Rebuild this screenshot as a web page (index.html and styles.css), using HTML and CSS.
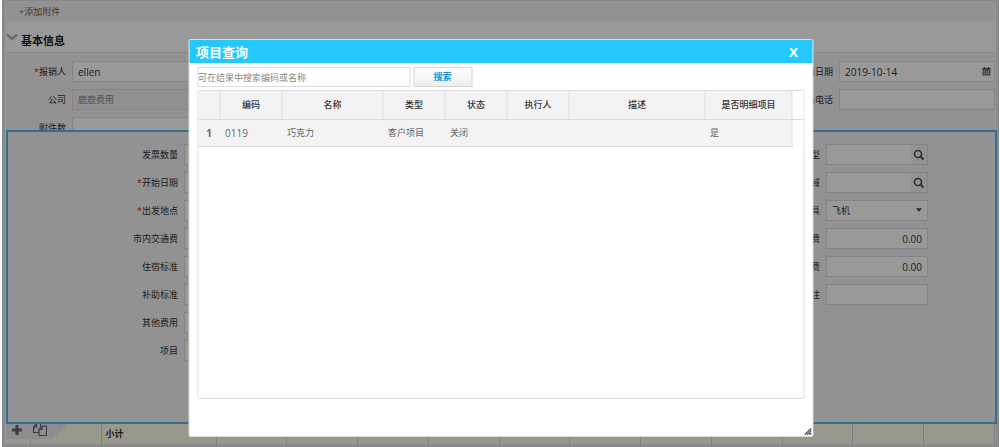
FILE: index.html
```html
<!DOCTYPE html>
<html lang="zh-CN">
<head>
<meta charset="utf-8">
<title>项目查询</title>
<link rel="stylesheet" href="styles.css">
</head>
<body>
<div class="frame">
  <main class="sheet">
    <div class="attach"><button type="button" class="attach-btn">+添加附件</button></div>
    <h2 class="section-title">
      <svg class="chevron" viewBox="0 0 12 8"><path d="M1 1.5 L6 6 L11 1.5" fill="none" stroke="#b4b4b4" stroke-width="2.6"/></svg>
      <span>基本信息</span>
    </h2>
    <form class="basic">
      <label for="person"><i>*</i>报销人</label>
      <input id="person" class="latin" value="ellen">
      <label for="date">申请日期</label>
      <div class="field">
        <input id="date" class="latin" value="2019-10-14">
        <svg class="calendar" viewBox="0 0 10 10"><path d="M0.5 1h9v2h-9zM2 0h1.4v1H2zM6.6 0H8v1H6.6z" fill="#555"/><path d="M.5 3.4h9v6.1h-9z" fill="#666"/><path d="M.5 5.4h9M.5 7.4h9M2.7 3.4v6M5 3.4v6M7.3 3.4v6" stroke="#ddd" stroke-width=".5"/></svg>
      </div>
      <label for="company">公司</label>
      <input id="company" class="disabled" value="鹿鹿费用" disabled>
      <label for="phone">联系电话</label>
      <input id="phone">
      <label for="count">附件数</label>
      <input id="count">
    </form>

    <form class="detail">
      <div class="column left">
        <label for="d1">发票数量</label><input id="d1">
        <label for="d2"><i>*</i>开始日期</label><input id="d2">
        <label for="d3"><i>*</i>出发地点</label><input id="d3">
        <label for="d4">市内交通费</label><input id="d4">
        <label for="d5">住宿标准</label><input id="d5">
        <label for="d6">补助标准</label><input id="d6">
        <label for="d7">其他费用</label><input id="d7">
        <label for="d8">项目</label><input id="d8">
      </div>
      <div class="column right">
        <label for="r1">类型</label>
        <div class="field"><input id="r1"><button type="button" class="lookup" aria-label="查找"><svg viewBox="0 0 12 12"><circle cx="5" cy="5" r="3.5" fill="none" stroke="#555" stroke-width="1.7"/><path d="M7.5 7.5L10.5 10.5" stroke="#555" stroke-width="2.2"/></svg></button></div>
        <label for="r2">区域</label>
        <div class="field"><input id="r2"><button type="button" class="lookup" aria-label="查找"><svg viewBox="0 0 12 12"><circle cx="5" cy="5" r="3.5" fill="none" stroke="#555" stroke-width="1.7"/><path d="M7.5 7.5L10.5 10.5" stroke="#555" stroke-width="2.2"/></svg></button></div>
        <label for="r3">交通工具</label>
        <div class="field"><select id="r3"><option>飞机</option></select><svg class="caret" viewBox="0 0 6 4"><path d="M0 .3h6L3 3.7z" fill="#444"/></svg></div>
        <label for="r4">交通费</label><input id="r4" class="latin number" value="0.00">
        <label for="r5">住宿费</label><input id="r5" class="latin number" value="0.00">
        <label for="r6">备注</label><input id="r6">
      </div>
    </form>

    <div class="summary">
      <table class="totals">
        <colgroup><col class="c-index"><col class="c-tools"><col class="c-name"><col><col><col><col><col><col><col><col><col><col><col></colgroup>
        <tr><td></td><td></td><th>小计</th><td></td><td></td><td></td><td></td><td></td><td></td><td></td><td></td><td></td><td></td><td></td></tr>
      </table>
      <div class="tools">
        <button type="button" aria-label="新增"><svg viewBox="0 0 12 12"><path d="M6 1v10M1 6h10" stroke="#666" stroke-width="3"/></svg></button>
        <button type="button" aria-label="复制"><svg class="copy" viewBox="0 0 14 13"><path d="M5.5 9.5h-5V4l3-3.5h4v3M3.5.5V4h-3M6 6.5l3-3.5h4.5v9.5H6zM9 3v3.5H6" fill="none" stroke="#666" stroke-width="1.2"/></svg></button>
      </div>
    </div>
  </main>

  <div class="shade"></div>
  <section class="dialog" role="dialog" aria-labelledby="dialog-title">
    <header class="dialog-head">
      <h1 id="dialog-title">项目查询</h1>
      <button type="button" class="close" aria-label="关闭">X</button>
    </header>
    <div class="dialog-body">
      <form class="search">
        <input type="text" placeholder="可在结果中搜索编码或名称" aria-label="搜索编码或名称">
        <button type="button">搜索</button>
      </form>
      <div class="grid">
        <table>
          <colgroup><col class="w-no"><col class="w-s"><col class="w-name"><col class="w-s"><col class="w-s"><col class="w-s"><col><col class="w-flag"><col class="w-end"></colgroup>
          <thead><tr><th></th><th>编码</th><th>名称</th><th>类型</th><th>状态</th><th>执行人</th><th>描述</th><th>是否明细项目</th><th class="end"></th></tr></thead>
          <tbody><tr><th class="latin">1</th><td class="latin">0119</td><td>巧克力</td><td>客户项目</td><td>关闭</td><td></td><td></td><td>是</td><td class="end"></td></tr></tbody>
        </table>
      </div>
    </div>
    <svg class="grip" viewBox="0 0 7 7"><path d="M0 7L7 0M2.5 7L7 2.5M5 7L7 5" stroke="#444" stroke-width="1.1"/></svg>
  </section>
</div>
</body>
</html>
```
FILE: styles.css
```css
* { box-sizing: border-box; }
body {
  margin: 0;
  background: #fff;
  color: #333;
  font: 9px/12px "Open Sans", "Noto Sans CJK SC", sans-serif;
}
button, input, select { font: inherit; color: inherit; margin: 0; }
button { padding: 0; border: 0; background: none; }
input, select {
  width: 100%;
  height: 21px;
  padding: 0 5px;
  border: 1px solid #dcdcdc;
  background: #fff;
  border-radius: 0;
}
svg { display: block; }
i { color: #e00; font-style: normal; }
input.latin, .latin { font-size: 10px; }

.frame {
  position: relative;
  margin: 0 1px 0 2px;
  border: 3px solid #e6e6e6;
  border-top: 0;
}
.sheet { padding: 0 1px; border-top: 1px solid #e4e4e4; }
.attach { padding: 5px 13px 4px; background: #f3f3f3; }
.attach-btn { display: block; color: #666; }
.section-title {
  display: flex;
  align-items: center;
  gap: 3px;
  margin: 0;
  height: 31px;
  padding: 7px 0 0;
  border-bottom: 1px solid #dedede;
  font-size: 11px;
  color: #222;
}
.chevron { width: 12px; height: 8px; margin-bottom: 8px; }

.basic {
  display: grid;
  grid-template-columns: 60px 1fr 1fr 156px;
  grid-auto-rows: 21px;
  gap: 7px 6px;
  height: 77px;
  padding-top: 8px;
  overflow: hidden;
  background: #f4f4f4;
}
label { align-self: center; text-align: right; white-space: nowrap; }
.field { position: relative; }
.disabled { background: #f0f0f0; color: #888; }
.calendar { position: absolute; right: 4px; top: 6px; width: 9px; height: 9px; }

.detail {
  display: flex;
  justify-content: space-between;
  min-height: 294px;
  margin-right: -2px;
  padding: 12px 67px 0 20px;
  border: 2px solid #52b8ef;
  background: #f3f3f3;
}
.column {
  display: grid;
  grid-auto-rows: 21px;
  gap: 7px 6px;
  align-content: start;
}
.left { grid-template-columns: 150px 102px; }
.right { grid-template-columns: 60px 102px; }
.number { text-align: right; }
.lookup {
  position: absolute;
  right: 1px;
  top: 1px;
  width: 16px;
  height: 19px;
  background: #f3f3f3;
}
.lookup svg { width: 12px; height: 12px; margin: auto; }
select { appearance: none; }
.caret { position: absolute; right: 6px; top: 8px; width: 6px; height: 4px; }

.summary { position: relative; }
.totals { width: 100%; border-collapse: collapse; table-layout: fixed; background: #fefeea; }
.totals td, .totals th {
  height: 20px;
  padding: 0 4px;
  border-right: 1px solid #d4d4d4;
  text-align: left;
}
.c-index { width: 24px; }
.c-tools { width: 71px; }
.c-name { width: 115px; }
.tools {
  position: absolute;
  left: 0;
  top: 0;
  display: flex;
  align-items: center;
  gap: 10px;
  width: 62px;
  height: 15px;
  padding: 0 5px 4px;
  background: #ebebeb;
  clip-path: polygon(0 0, 100% 0, 74% 100%, 0 100%);
}
.tools svg { width: 12px; height: 12px; }
.tools .copy { width: 14px; height: 13px; }

.shade { position: absolute; inset: 0 -3px -3px; background: rgba(0, 0, 0, .4); }

.dialog {
  position: absolute;
  top: 39px;
  left: 50%;
  width: 625px;
  transform: translateX(-50%);
  background: #fff;
  border: 1px solid #ddd;
  border-radius: 2px;
}
.dialog-head {
  display: flex;
  align-items: center;
  justify-content: space-between;
  height: 23px;
  padding: 0 14px 0 7px;
  background: #24c8fd;
  color: #fff;
}
.dialog-head h1 { margin: 0; font-size: 13px; line-height: 20px; }
.close { font-size: 13px; font-weight: 700; line-height: 20px; }
.dialog-body { padding: 4px 8px 37px; }
.search { display: flex; gap: 3px; margin-bottom: 3px; }
.search input { width: 213px; height: 20px; padding: 0; }
.search input::placeholder { color: #888; opacity: 1; }
.search button {
  width: 59px;
  height: 20px;
  border: 1px solid #d4d4d4;
  background: linear-gradient(#fff, #eee);
  color: #1496d2;
  font-weight: 700;
}
.grid { min-height: 309px; border: 1px solid #ddd; border-radius: 2px; }
.grid table { width: 100%; border-collapse: collapse; table-layout: fixed; }
.grid th, .grid td { padding: 0 5px; background: #f3f3f3; border-bottom: 1px solid #ddd; }
.grid thead th { height: 28px; border-right: 1px solid #ddd; font-weight: 500; }
.grid tbody th, .grid tbody td { height: 27px; color: #666; }
.grid td { text-align: left; }
.grid tbody td:nth-child(8) { border-right: 1px solid #ddd; }
.grid thead .end { background: #fff; border-right: 0; }
.grid tbody .end { background: #fff; border-bottom: 0; }
.w-no { width: 22px; }
.w-s { width: 62px; }
.w-name { width: 101px; }
.w-flag { width: 87px; }
.w-end { width: 11px; }
.grip { position: absolute; right: 1px; bottom: 1px; width: 7px; height: 7px; }
```
